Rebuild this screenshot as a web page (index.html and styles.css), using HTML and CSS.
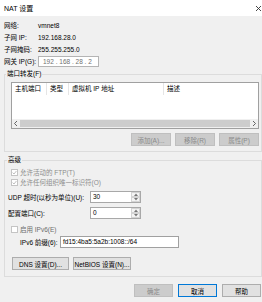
FILE: index.html
```html
<!DOCTYPE html>
<html lang="zh-CN">
<head>
    <meta charset="UTF-8">
    <title>NAT 设置</title>
    <link rel="stylesheet" href="styles.css">
</head>
<body>
    <div class="titlebar">
        <span>NAT 设置</span>
        <svg class="close" width="7" height="7" viewBox="0 0 7 7"><path d="M1 1L6 6M6 1L1 6" stroke="#333" stroke-width="0.9"/></svg>
    </div>
    <div class="content">
        <div class="info">
            <span>网络:</span><span>vmnet8</span>
            <span>子网 IP:</span><span>192.168.28.0</span>
            <span>子网掩码:</span><span>255.255.255.0</span>
            <span>网关 IP(G):</span><div class="ipbox">192 . 168 . 28 . 2</div>
        </div>

        <fieldset class="group ports">
            <legend>端口转发(F)</legend>
            <div class="list">
                <div class="list-head">
                    <span class="col c1">主机端口</span>
                    <span class="col c2">类型</span>
                    <span class="col c3">虚拟机 IP 地址</span>
                    <span class="col c4">描述</span>
                </div>
                <div class="list-body"></div>
                <div class="hscroll">
                    <svg class="arrow" width="8" height="9" viewBox="0 0 8 9"><path d="M5 2L2.5 4.5L5 7" fill="none" stroke="#555" stroke-width="0.9"/></svg>
                    <div class="thumb"></div>
                    <svg class="arrow" width="8" height="9" viewBox="0 0 8 9"><path d="M3 2L5.5 4.5L3 7" fill="none" stroke="#555" stroke-width="0.9"/></svg>
                </div>
            </div>
            <div class="list-buttons">
                <button class="btn" disabled>添加(A)...</button>
                <button class="btn" disabled>移除(R)</button>
                <button class="btn" disabled>属性(P)</button>
            </div>
        </fieldset>

        <fieldset class="group advanced">
            <legend>高级</legend>
            <div class="check disabled">
                <span class="box"><svg width="5" height="5" viewBox="0 0 5 5"><path d="M0.6 2.6L2 4L4.4 1" fill="none" stroke="#b0b0b0" stroke-width="0.8"/></svg></span>
                <span>允许活动的 FTP(T)</span>
            </div>
            <div class="check disabled">
                <span class="box"><svg width="5" height="5" viewBox="0 0 5 5"><path d="M0.6 2.6L2 4L4.4 1" fill="none" stroke="#b0b0b0" stroke-width="0.8"/></svg></span>
                <span>允许任何组织唯一标识符(O)</span>
            </div>
            <div class="field udp">
                <label>UDP 超时(以秒为单位)(U):</label>
                <div class="spinbox">
                    <span class="value">30</span>
                    <div class="spin">
                        <span><svg width="4" height="3" viewBox="0 0 4 3"><path d="M0 3L2 0.5L4 3Z" fill="#777"/></svg></span>
                        <span><svg width="4" height="3" viewBox="0 0 4 3"><path d="M0 0L2 2.5L4 0Z" fill="#777"/></svg></span>
                    </div>
                </div>
            </div>
            <div class="field port">
                <label>配置端口(C):</label>
                <div class="spinbox">
                    <span class="value">0</span>
                    <div class="spin">
                        <span><svg width="4" height="3" viewBox="0 0 4 3"><path d="M0 3L2 0.5L4 3Z" fill="#777"/></svg></span>
                        <span><svg width="4" height="3" viewBox="0 0 4 3"><path d="M0 0L2 2.5L4 0Z" fill="#777"/></svg></span>
                    </div>
                </div>
            </div>
            <div class="check ipv6">
                <span class="box"></span>
                <span>启用 IPv6(E)</span>
            </div>
            <div class="field prefix">
                <label>IPv6 前缀(6):</label>
                <div class="textbox">fd15:4ba5:5a2b:1008::/64</div>
            </div>
            <div class="net-buttons">
                <button class="btn dns">DNS 设置(D)...</button>
                <button class="btn netbios">NetBIOS 设置(N)...</button>
            </div>
        </fieldset>

        <div class="footer">
            <button class="btn" disabled>确定</button>
            <button class="btn focused">取消</button>
            <button class="btn">帮助</button>
        </div>
    </div>
</body>
</html>
```

FILE: styles.css
```css
body {
    margin: 0;
    width: 262px;
    height: 302px;
    overflow: hidden;
    background: #f0f0f0;
    font-family: "Liberation Sans", "Noto Sans CJK SC", sans-serif;
    font-size: 6.5px;
    color: #000;
}
.titlebar {
    height: 16px;
    background: #fff;
    display: flex;
    align-items: center;
    justify-content: space-between;
    padding: 0 0 0 4px;
    font-size: 7px;
}
.content {
    padding: 3px 0 0 4px;
}
.info {
    display: grid;
    grid-template-columns: 34px auto;
    grid-auto-rows: 12px;
    align-items: center;
}
.ipbox {
    width: 61px;
    height: 11px;
    box-sizing: border-box;
    border: 1px solid #b4b4b4;
    background: #fff;
    color: #707070;
    padding-left: 4px;
    line-height: 9px;
}
.group {
    margin: 0;
    border: 1px solid #dcdcdc;
    min-width: 0;
}
legend {
    padding: 0 1px;
    line-height: 8px;
}
.ports {
    margin-top: 3px;
    padding: 4px 2px 5px 6px;
}
.ports legend {
    margin-left: -5px;
}
.list {
    height: 47px;
    box-sizing: border-box;
    border: 1px solid #a0a0a0;
    background: #fff;
    display: flex;
    flex-direction: column;
}
.list-head {
    height: 12px;
    display: flex;
    line-height: 12px;
}
.col {
    box-sizing: border-box;
    padding-left: 3px;
    border-right: 1px solid #e5e5e5;
    white-space: nowrap;
}
.c1 { width: 35px; }
.c2 { width: 22px; }
.c3 { width: 95px; }
.c4 { flex: 1; border-right: none; }
.list-body {
    flex: 1;
}
.hscroll {
    height: 9px;
    display: flex;
    align-items: center;
    background: #f0f0f0;
}
.arrow {
    flex: none;
}
.thumb {
    flex: 1;
    height: 7px;
    background: #cdcdcd;
}
.btn {
    height: 13px;
    box-sizing: border-box;
    padding: 0;
    border: 1px solid #adadad;
    background: #e1e1e1;
    font-family: inherit;
    font-size: 6.5px;
    color: #000;
    white-space: nowrap;
}
.btn:disabled {
    background: #cccccc;
    border-color: #bfbfbf;
    color: #8a8a8a;
}
.list-buttons {
    display: flex;
    justify-content: flex-end;
    gap: 4px;
    margin-top: 4px;
}
.list-buttons .btn {
    width: 40px;
}
.advanced {
    margin-top: 4px;
    padding: 3px 2px 6px 3px;
}
.advanced legend {
    margin-left: -1px;
}
.check {
    display: flex;
    align-items: center;
    gap: 2px;
    height: 10px;
    margin-left: 3px;
}
.check.disabled {
    color: #8c8c8c;
}
.check.ipv6 {
    margin-top: 5px;
    color: #6d6d6d;
}
.box {
    width: 7px;
    height: 7px;
    box-sizing: border-box;
    border: 1px solid #c4c4c4;
    background: #fff;
    display: flex;
    align-items: center;
    justify-content: center;
}
.field {
    display: flex;
    align-items: center;
}
.udp {
    margin-top: 4px;
}
.port {
    margin-top: 4px;
}
.field label {
    width: 82px;
    white-space: nowrap;
}
.spinbox {
    width: 51px;
    height: 12px;
    box-sizing: border-box;
    border: 1px solid #a8a8a8;
    background: #fff;
    display: flex;
    justify-content: space-between;
}
.value {
    padding-left: 2px;
    line-height: 10px;
}
.spin {
    width: 9px;
    display: flex;
    flex-direction: column;
}
.spin span {
    flex: 1;
    border: 1px solid #d4d4d4;
    background: #f4f4f4;
    display: flex;
    align-items: center;
    justify-content: center;
}
.prefix {
    margin-top: 2px;
}
.prefix label {
    width: 40px;
    margin-left: 12px;
}
.textbox {
    width: 119px;
    height: 12px;
    box-sizing: border-box;
    border: 1px solid #a0a0a0;
    background: #fff;
    padding-left: 2px;
    line-height: 10px;
}
.net-buttons {
    display: flex;
    gap: 4px;
    margin-top: 9px;
    margin-left: 4px;
}
.dns {
    width: 57px;
}
.netbios {
    width: 58px;
}
.footer {
    display: flex;
    justify-content: flex-end;
    gap: 5px;
    margin-top: 7px;
    padding-right: 1px;
}
.footer .btn {
    width: 39px;
}
.focused {
    border-color: #0078d7;
}
```
